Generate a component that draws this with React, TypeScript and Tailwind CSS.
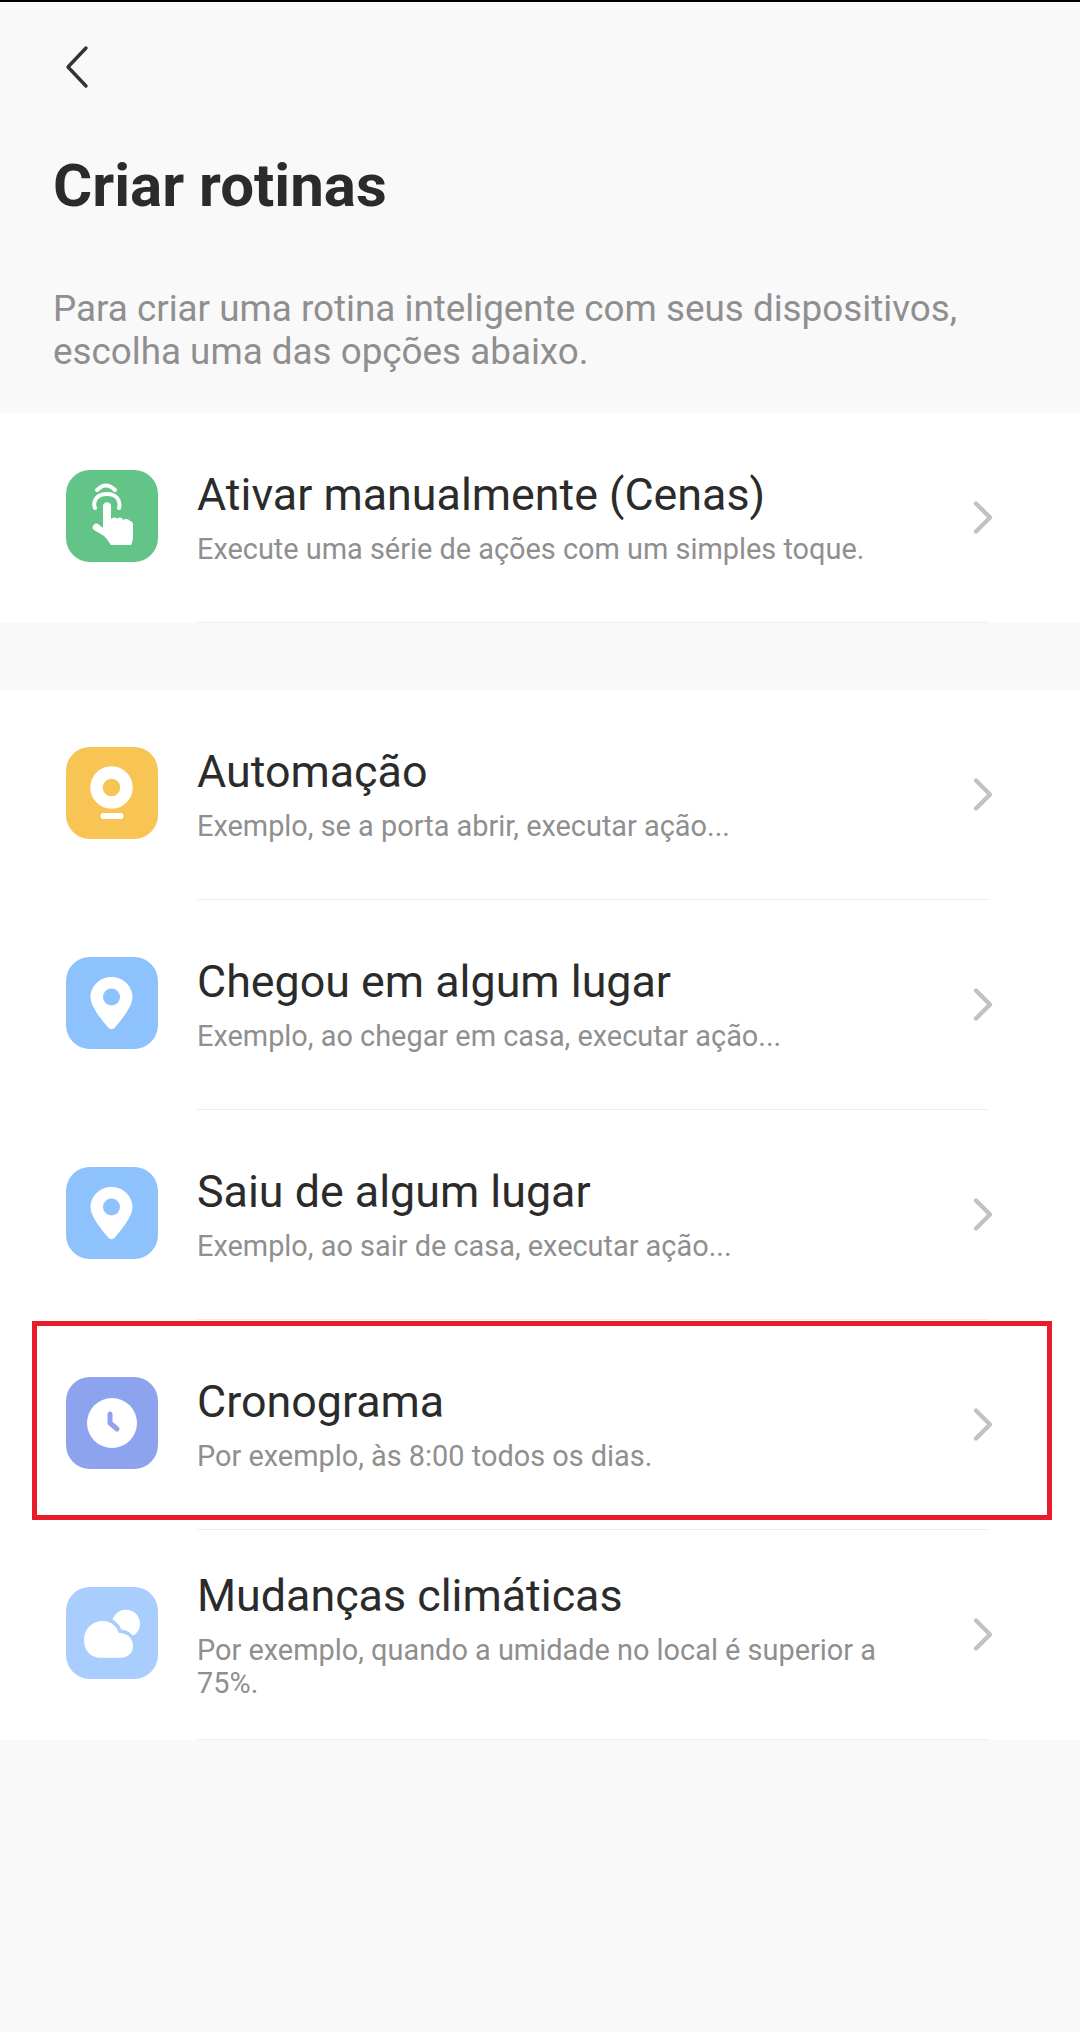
const Chevron = () => (
  <svg width="28" height="44" viewBox="0 0 28 44" fill="none" className="shrink-0">
    <path d="M6 7.5 L20 21.5 L6 35.5" stroke="#c2c2c2" strokeWidth="4.4" strokeLinecap="round" strokeLinejoin="round" />
  </svg>
);

const TouchIcon = () => (
  <svg width="92" height="92" viewBox="0 0 92 92" fill="none">
    <path d="M31 20 Q40 11 49 20" stroke="#fff" strokeWidth="4" strokeLinecap="round" />
    <path d="M29 38 C26 30 32 24 41 24 C50 24 55 30 53 38" stroke="#fff" strokeWidth="4" strokeLinecap="round" />
    <path
      d="M37 36 C37 31 45 31 45 36 L45 49 C47 47 50 47 51 49 C53 47 56 47 57 50 C59 48 63 49 64 51 C66 51 67 53 67 55 L67 66 C67 70 66 73 65 75 L45 75 C43 72 41 69 38 66 L28 60 C24 57 29 52 32 54 L37 58 Z"
      fill="#fff"
    />
  </svg>
);

const CameraIcon = () => (
  <svg width="92" height="92" viewBox="0 0 92 92" fill="none">
    <circle cx="45.500" cy="40.500" r="15" fill="none" stroke="#fff" strokeWidth="12.500" />
    <rect x="34.500" y="66" width="23" height="6" rx="3" fill="#fff" />
  </svg>
);

const PinIcon = () => (
  <svg width="92" height="92" viewBox="0 0 92 92" fill="none">
    <path
      d="M45.500 20 C58 20 66.500 30 66.500 40 C66.500 50 55 63 48.500 71 C47 72.500 44 72.500 42.500 71 C36 63 24.500 50 24.500 40 C24.500 30 33 20 45.500 20 Z"
      fill="#fff"
    />
    <circle cx="45.500" cy="40" r="8.500" fill="#8dc2fd" />
  </svg>
);

const ClockIcon = () => (
  <svg width="92" height="92" viewBox="0 0 92 92" fill="none">
    <circle cx="46" cy="46" r="25" fill="#fff" />
    <path d="M44 37 L44 46 L51 52" stroke="#8ea3ee" strokeWidth="5" strokeLinecap="round" strokeLinejoin="round" />
  </svg>
);

const cloud = "M34 70.700 C24 70.700 18 63 18 53 C18 42 26 34 37 34 C44 34 50 38 53 46 C61 46 67 51 67 59 C67 66 62 70.700 55 70.700 Z";

const CloudIcon = () => (
  <svg width="92" height="92" viewBox="0 0 92 92" fill="none">
    <circle cx="60" cy="36.700" r="14" fill="#fff" />
    <path d={cloud} fill="#a9cdfd" stroke="#a9cdfd" strokeWidth="7" />
    <path d={cloud} fill="#fff" />
  </svg>
);

const Row = ({
  icon,
  color,
  title,
  sub,
  marked,
}: {
  icon: React.ReactNode;
  color: string;
  title: string;
  sub: string;
  marked?: boolean;
}) => (
  <div className="relative flex h-[210px] pl-[66px]">
    <div className={`mt-[57px] flex h-[92px] w-[92px] shrink-0 items-center justify-center rounded-[24px] ${color}`}>{icon}</div>
    <div className="ml-[39px] mr-[91px] flex flex-1 items-center border-b border-[#eeeeee]">
      <div className="max-w-[700px]">
        <div className="text-[44.800px] leading-[52px] text-[#2b2b2b]">{title}</div>
        <div className="mt-[12px] text-[28.900px] leading-[33px] text-[#8f8f8f]">{sub}</div>
      </div>
    </div>
    <div className="absolute right-[82px] top-[83px]">
      <Chevron />
    </div>
    {marked && <div className="absolute left-[32px] right-[28px] top-[1px] h-[199px] border-[5px] border-[#e81c2b]" />}
  </div>
);

export default function App() {
  return (
    <div className="min-h-[2032px] w-[1080px] border-t-2 border-black bg-[#f9f9f9] font-['Roboto',sans-serif]">
      <div className="pl-[53px]">
        <svg width="40" height="48" viewBox="0 0 40 48" fill="none" className="ml-[8px] mt-[42px]">
          <path d="M25 4 L7 23 L25 42" stroke="#333333" strokeWidth="3.400" strokeLinecap="round" strokeLinejoin="round" />
        </svg>
        <h1 className="mt-[56px] text-[60px] font-bold leading-[76px] text-[#2b2b2b]">Criar rotinas</h1>
        <p className="mt-[63px] text-[36.800px] leading-[43px] text-[#8f8f8f]">
          Para criar uma rotina inteligente com seus dispositivos,
          <br />
          escolha uma das opções abaixo.
        </p>
      </div>

      <div className="mt-[40px] bg-white">
        <Row
          icon={<TouchIcon />}
          color="bg-[#62c487]"
          title="Ativar manualmente (Cenas)"
          sub="Execute uma série de ações com um simples toque."
        />
      </div>

      <div className="mt-[67px] bg-white">
        <Row icon={<CameraIcon />} color="bg-[#f8c454]" title="Automação" sub="Exemplo, se a porta abrir, executar ação..." />
        <Row icon={<PinIcon />} color="bg-[#8dc2fd]" title="Chegou em algum lugar" sub="Exemplo, ao chegar em casa, executar ação..." />
        <Row icon={<PinIcon />} color="bg-[#8dc2fd]" title="Saiu de algum lugar" sub="Exemplo, ao sair de casa, executar ação..." />
        <Row icon={<ClockIcon />} color="bg-[#8ea3ee]" title="Cronograma" sub="Por exemplo, às 8:00 todos os dias." marked />
        <Row
          icon={<CloudIcon />}
          color="bg-[#a9cdfd]"
          title="Mudanças climáticas"
          sub="Por exemplo, quando a umidade no local é superior a 75%."
        />
      </div>
    </div>
  );
}
